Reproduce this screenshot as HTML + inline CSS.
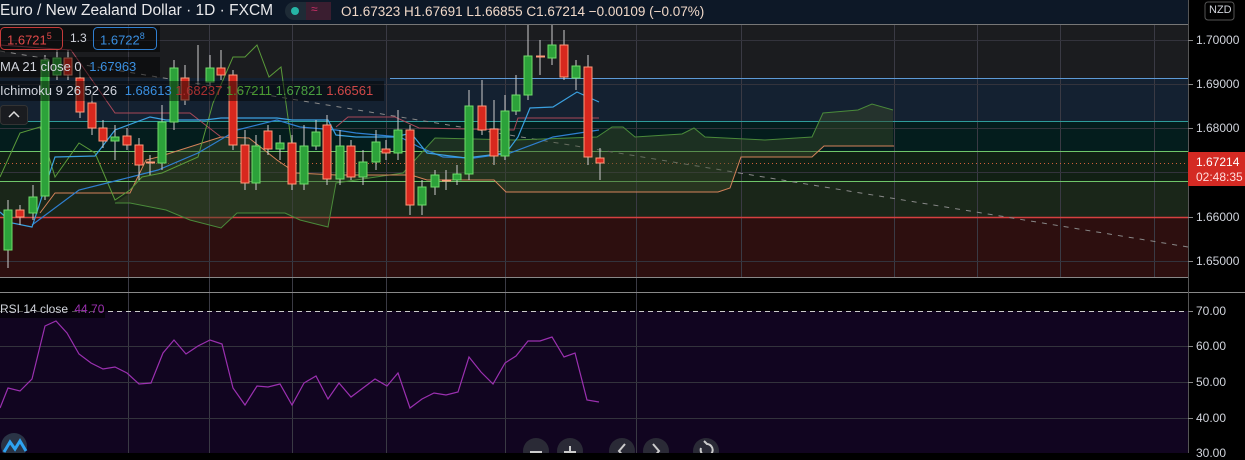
<!DOCTYPE html>
<html><head><meta charset="utf-8"><style>
html,body{margin:0;padding:0;background:#000;width:1245px;height:453px;overflow:hidden;font-family:"Liberation Sans",sans-serif}
.t{position:absolute;white-space:nowrap;font-size:13px;color:#d1d4dc}
.a{font-size:12px !important}
</style></head><body>
<svg width="1245" height="453" style="position:absolute;left:0;top:0" xmlns="http://www.w3.org/2000/svg">
<rect x="0" y="0" width="1188" height="24" fill="#0d1827"/>
<rect x="0" y="24" width="1188" height="54" fill="#1b1c1f"/>
<rect x="0" y="78" width="1188" height="43" fill="#142131"/>
<rect x="0" y="121" width="1188" height="30" fill="#041d1d"/>
<rect x="0" y="151" width="1188" height="30" fill="#112014"/>
<rect x="0" y="181" width="1188" height="36" fill="#1a2619"/>
<rect x="0" y="217" width="1188" height="60" fill="#2d0f0f"/>
<rect x="0" y="311" width="1188" height="142" fill="#110520"/>
<g stroke="#3a3a44" stroke-width="1">
<path d="M128.5 24V453M209.5 24V453M292.5 24V453M386.5 24V453M505.5 24V453M636.5 24V453M741.5 24V277M894.5 24V277M977.5 24V277M1060.5 24V277M1154.5 24V277"/>
<path d="M0 40.5H1188M0 84.5H1188M0 128.5H1188M0 172.5H1188M0 261.5H1188M0 346.5H1188M0 382.5H1188M0 418.5H1188" stroke="#33333c"/>
</g>
<line x1="0" y1="24.5" x2="1188" y2="24.5" stroke="#777" />
<line x1="390" y1="78.5" x2="1188" y2="78.5" stroke="#5d9ad6"/>
<line x1="0" y1="121.5" x2="1188" y2="121.5" stroke="#2e9c9a"/>
<line x1="0" y1="151.5" x2="1188" y2="151.5" stroke="#6fc66a"/>
<line x1="0" y1="181.5" x2="1188" y2="181.5" stroke="#6fc66a"/>
<line x1="0" y1="217.5" x2="1188" y2="217.5" stroke="#d64040" stroke-width="1.5"/>
<line x1="0" y1="277.5" x2="1188" y2="277.5" stroke="#888"/>
<line x1="0" y1="292.5" x2="1245" y2="292.5" stroke="#888"/>
<line x1="0" y1="163.5" x2="1188" y2="163.5" stroke="#d0603a" stroke-dasharray="1,3"/>
<line x1="0" y1="311.5" x2="1188" y2="311.5" stroke="#ccc" stroke-dasharray="5,4"/>
<line x1="0" y1="51" x2="1188" y2="247" stroke="#888" stroke-dasharray="5,6"/>
<path d="M115 203L130 203L166 210L190 220L221 228L237 213L285 213L300 220L328 227L336 183L403 173L435 138L514 140L597 137L612 127L623 127L635 137L682 134L694 128L705 137L765 140L812 137L823 113L858 110L872 104L893 110L893 146L824 146L812 157L741 157L730 188L718 192L506 192L494 180L427 180L411 175L296 173L277 160L249 138L221 137L158 157L146 160L130 193Z" fill="#3a4a2a" fill-opacity="0.45"/>
<polyline fill="none" stroke="#4a8a3a" stroke-width="1" points="115,203 130,203 166,210 190,220 221,228 237,213 285,213 300,220 328,227 336,183 403,173 435,138 514,140 597,137 612,127 623,127 635,137 682,134 694,128 705,137 765,140 812,137 823,113 858,110 872,104 893,110"/>
<polyline fill="none" stroke="#d4825a" stroke-width="1" points="40,213 55,193 130,193 146,160 158,157 221,137 249,138 277,160 296,173 336,175 411,175 427,180 494,180 506,192 718,192 730,188 741,157 812,157 824,146 894,146"/>
<polyline fill="none" stroke="#a84858" stroke-width="1" points="0,45 71,50 115,113 190,113 221,137"/>
<polyline fill="none" stroke="#a84858" stroke-width="1" points="336,127 348,117 395,117 419,128 514,130 518,118 599,118"/>
<polyline fill="none" stroke="#5a9a3a" stroke-width="1" points="0,177 20,133 40,127 55,177 79,143 95,153 115,200 130,190 142,177 162,173 198,157 213,103 233,57 245,57 257,45 269,77 281,67 292,147"/>
<polyline fill="none" stroke="#2f7fd0" stroke-width="1.2" points="32,225 79,190 119,180 158,170 198,153 237,130 277,120 300,127 336,130 356,133 400,137 419,147 443,157 474,158 510,153 553,137 599,130"/>
<polyline fill="none" stroke="#3aa0e0" stroke-width="1.2" points="0,212 12,223 32,227 55,157 95,156 115,130 150,117 166,120 205,120 221,118 277,118 292,120 328,120 336,135 356,137 395,137 411,133 427,153 466,158 506,153 518,137 530,108 553,107 577,92 599,102"/>
<g stroke-width="1">
<g stroke="#ccc"><path d="M8 200V268M20 205V225M33 185V220M45 55V200M57 50V80M68 50V80M80 70V118M92 95V135M103 120V148M115 125V160M127 128V150M139 138V180M150 155V175M162 105V170M174 60V130M185 65V105M198 45V85M210 55V85M221 50V80M233 70V150M245 130V190M256 135V190M268 125V155M280 135V160M292 135V190M304 125V190M316 120V150M327 115V185M340 130V185M351 140V180M363 150V185M376 130V170M386 140V160M398 110V160M410 125V215M422 180V215M435 170V195M446 170V190M457 165V185M469 90V180M482 80V135M494 100V165M505 95V160M516 75V115M528 25V100M540 40V75M552 25V65M564 30V80M576 60V90M588 55V165M600 148V180"/></g>
<g fill="#2ca23a" stroke="#6fdc6a">
<rect x="4" y="210" width="8" height="40"/><rect x="29" y="197" width="8" height="16"/><rect x="41" y="60" width="8" height="136"/><rect x="53" y="58" width="8" height="17"/><rect x="111" y="137" width="8" height="4"/><rect x="158" y="122" width="8" height="41"/><rect x="170" y="68" width="8" height="54"/><rect x="206" y="68" width="8" height="14"/><rect x="252" y="146" width="8" height="37"/><rect x="276" y="143" width="8" height="6"/><rect x="300" y="146" width="8" height="38"/><rect x="312" y="132" width="8" height="14"/><rect x="336" y="146" width="8" height="33"/><rect x="359" y="162" width="8" height="15"/><rect x="372" y="142" width="8" height="20"/><rect x="394" y="130" width="8" height="23"/><rect x="418" y="187" width="8" height="18"/><rect x="431" y="175" width="8" height="12"/><rect x="453" y="174" width="8" height="6"/><rect x="465" y="106" width="8" height="68"/><rect x="501" y="111" width="8" height="45"/><rect x="512" y="95" width="8" height="16"/><rect x="524" y="56" width="8" height="39"/><rect x="548" y="45" width="8" height="13"/><rect x="572" y="66" width="8" height="12"/>
</g>
<g fill="#d8281e" stroke="#ff9a7a">
<rect x="16" y="210" width="8" height="7"/><rect x="64" y="58" width="8" height="17"/><rect x="76" y="78" width="8" height="34"/><rect x="88" y="103" width="8" height="25"/><rect x="99" y="128" width="8" height="13"/><rect x="123" y="136" width="8" height="9"/><rect x="135" y="145" width="8" height="20"/><rect x="181" y="78" width="8" height="22"/><rect x="217" y="68" width="8" height="7"/><rect x="229" y="75" width="8" height="70"/><rect x="241" y="145" width="8" height="38"/><rect x="264" y="131" width="8" height="18"/><rect x="288" y="143" width="8" height="41"/><rect x="323" y="125" width="8" height="54"/><rect x="347" y="146" width="8" height="31"/><rect x="382" y="149" width="8" height="4"/><rect x="406" y="130" width="8" height="75"/><rect x="478" y="106" width="8" height="24"/><rect x="490" y="129" width="8" height="27"/><rect x="560" y="45" width="8" height="32"/><rect x="584" y="67" width="8" height="90"/><rect x="596" y="158" width="8" height="5"/>
</g>
<path d="M146 162.5H155M442 180.5H451M536 56.5H545" stroke="#ff9a7a" stroke-width="2"/>
</g>
<polyline fill="none" stroke="#9b30b0" stroke-width="1.2" points="0,408 8,388 20,391 32,379 45,326 56,321 67,333 79,354 91,363 103,369 115,367 127,373 139,384 151,383 163,353 174,340 186,354 198,346 210,340 222,344 233,388 245,405 257,386 268,387 280,384 292,405 304,383 316,376 328,399 339,383 351,397 363,388 375,379 387,386 398,373 410,408 422,399 434,393 446,395 458,392 469,357 481,372 493,384 505,363 516,356 528,341 540,341 552,337 564,357 575,353 587,400 599,402"/>
<line x1="1188.5" y1="0" x2="1188.5" y2="453" stroke="#555"/>
<g stroke="#888"><path d="M1188 40.5H1193M1188 84.5H1193M1188 128.5H1193M1188 217.5H1193M1188 261.5H1193M1188 311.5H1193M1188 346.5H1193M1188 382.5H1193M1188 418.5H1193"/></g>
<rect x="1188" y="152" width="57" height="34" fill="#d42a23"/>
<rect x="1205" y="2" width="29" height="18" rx="3" fill="none" stroke="#555"/>
<circle cx="14" cy="446" r="13" fill="#2a3446"/>
<path d="M4 452L10 442L15 449L20 441L26 451" fill="none" stroke="#2ea3f2" stroke-width="3"/>
<g fill="#2a2a36"><circle cx="536" cy="451" r="13"/><circle cx="570" cy="451" r="13"/><circle cx="622" cy="451" r="13"/><circle cx="656" cy="451" r="13"/><circle cx="706" cy="451" r="13"/></g>
<g stroke="#ccc" stroke-width="2" fill="none"><path d="M530 452H542M564 452H576M570 446V458M625 444L619 451L625 458M653 444L659 451L653 458M701 448A6 6 0 1 0 707 444L704 441"/></g>
<rect x="0" y="26" width="160" height="26" fill="#000" fill-opacity="0.5"/>
<rect x="0" y="57" width="160" height="20" fill="#000" fill-opacity="0.45"/>
<rect x="0" y="81" width="384" height="20" fill="#000" fill-opacity="0.45"/>
<rect x="0.5" y="105.5" width="27" height="19" rx="3" fill="#1a1c20" stroke="#333"/>
<path d="M9 117L14 112L19 117" stroke="#ddd" stroke-width="1.5" fill="none"/>
<rect x="0.5" y="27.5" width="62" height="22" rx="4" fill="none" stroke="#c53a3a"/>
<rect x="93.5" y="27.5" width="63" height="22" rx="4" fill="none" stroke="#2f7fd0"/>
<rect x="285" y="2" width="46" height="18" rx="9" fill="#1e2b36"/>
<rect x="306" y="2" width="25" height="18" fill="#3a1e30"/>
<circle cx="295" cy="11" r="4" fill="#26b5a5"/>
<rect x="0" y="298" width="105" height="20" fill="#000" fill-opacity="0.6"/>
</svg>
<div class="t" style="left:0;top:2px;font-size:15.5px;color:#e8e8ea">Euro / New Zealand Dollar · 1D · FXCM</div>
<div class="t" style="left:311px;top:2px;color:#d0306a;font-size:12px">≈</div>
<div class="t" style="left:341px;top:4px;color:#f0d8c8;font-size:13.5px">O1.67323 H1.67691 L1.66855 C1.67214 −0.00109 (−0.07%)</div>
<div class="t" style="left:7px;top:31px;color:#e04848">1.6721<sup style="font-size:9px">5</sup></div>
<div class="t" style="left:70px;top:31px;font-size:12px">1.3</div>
<div class="t" style="left:100px;top:31px;color:#3a8fe0">1.6722<sup style="font-size:9px">8</sup></div>
<div class="t" style="left:0;top:59px">MA 21 close 0 <span style="color:#3a8fe0;margin-left:4px">1.67963</span></div>
<div class="t" style="left:0;top:83px">Ichimoku 9 26 52 26 <span style="color:#3a8fe0;margin-left:4px">1.68613</span> <span style="color:#a83030">1.68237</span> <span style="color:#4a9a30">1.67211</span> <span style="color:#4aa040">1.67821</span> <span style="color:#d04848">1.66561</span></div>
<div class="t" style="left:0;top:302px;font-size:12px">RSI 14 close <span style="color:#9b30b0;margin-left:3px">44.70</span></div>
<div class="t" style="left:1209px;top:4px;font-size:11px">NZD</div>
<div class="t a" style="left:1196px;top:33px">1.70000</div>
<div class="t a" style="left:1196px;top:77px">1.69000</div>
<div class="t a" style="left:1196px;top:121px">1.68000</div>
<div class="t a" style="left:1196px;top:155px;color:#fff">1.67214</div>
<div class="t a" style="left:1196px;top:170px;color:#fdd">02:48:35</div>
<div class="t a" style="left:1196px;top:210px">1.66000</div>
<div class="t a" style="left:1196px;top:254px">1.65000</div>
<div class="t a" style="left:1196px;top:304px">70.00</div>
<div class="t a" style="left:1196px;top:339px">60.00</div>
<div class="t a" style="left:1196px;top:375px">50.00</div>
<div class="t a" style="left:1196px;top:411px">40.00</div>
<div class="t a" style="left:1196px;top:446px">30.00</div>
</body></html>
